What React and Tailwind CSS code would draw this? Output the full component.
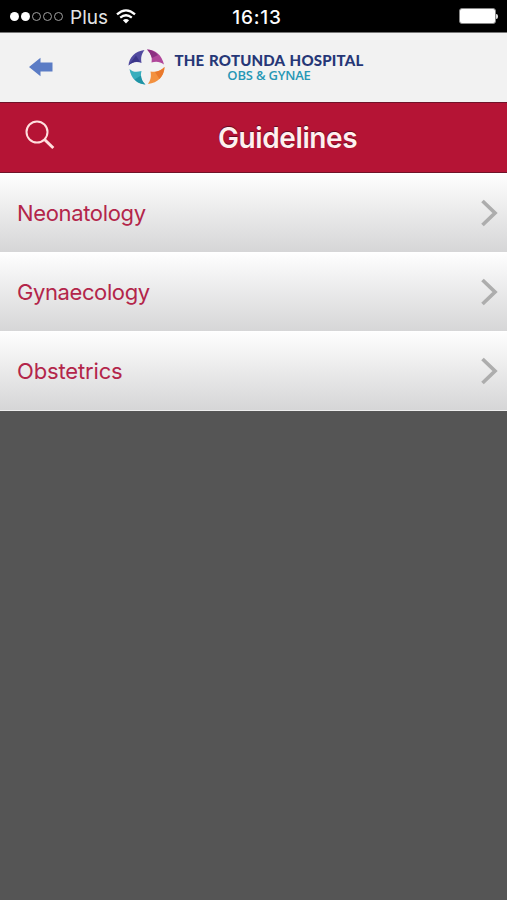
const rows = [
  { label: "Neonatology", tracking: "tracking-[-0.35px]" },
  { label: "Gynaecology", tracking: "tracking-[-0.4px]" },
  { label: "Obstetrics", tracking: "tracking-[-0.15px]" },
];

function StatusBar() {
  return (
    <div className="grid h-8 grid-cols-3 items-center bg-black pl-[10px] pr-[9px] text-white">
      <div className="flex items-center">
        <div className="flex gap-[2px]">
          <span className="size-[9px] rounded-full bg-white" />
          <span className="size-[9px] rounded-full bg-white" />
          <span className="size-[9px] rounded-full border border-[#a0a0a0]" />
          <span className="size-[9px] rounded-full border border-[#a0a0a0]" />
          <span className="size-[9px] rounded-full border border-[#a0a0a0]" />
        </div>
        <span className="ml-[7px] mt-[2px] text-[19px] leading-none text-[#e4e4e4]">Plus</span>
        <svg className="ml-[8px] h-[15px] w-[20px]" viewBox="0 0 20 15" fill="none" stroke="white">
          <path d="M1 5.4Q10-2.6 19 5.4" strokeWidth="2.3" />
          <path d="M4.2 8.7Q10 3.8 15.8 8.7" strokeWidth="2.2" />
          <path d="M10 14.5 6.9 11.3Q10 8.8 13.1 11.3Z" fill="white" stroke="none" />
        </svg>
      </div>
      <span className="mt-[2px] pl-[6px] text-center text-[19px] font-medium leading-none tracking-[0.8px]">16:13</span>
      <div className="flex items-center justify-end">
        <div className="h-[16px] w-[37px] rounded-[3px] border border-[#888] bg-white" />
        <span className="h-[5px] w-[2px] rounded-r bg-[#ddd]" />
      </div>
    </div>
  );
}

function Emblem() {
  return (
    <svg className="h-[36px] w-[37px]" viewBox="0 0 37 36">
      <path d="M.5 16.500C1 9 7 2 16.500 1C13.500 5 12.500 8.500 13.500 14C9 12 4 13 .5 16.500Z" fill="#514a9f" />
      <path d="M.5 16.500 8 6.500l4 6.500Q5 11.500 .5 16.500Z" fill="#3b3588" />
      <path d="M19 .5C27 .5 34 6 36 15.500C32 13 29 12 23.500 13.500C24.500 8 23 4 19 .5Z" fill="#b0479a" />
      <path d="M19 .5Q26 1 30 6L24 9Q22.500 4 19 .5Z" fill="#8b2f81" />
      <path d="M36.500 18C36.500 27 30 34 20 35C22.500 31 23.500 28 22.500 22.500C28 23.500 33 22 36.500 18Z" fill="#f3913f" />
      <path d="M36.500 18Q36 25 31.500 30L27 23Q33 22 36.500 18Z" fill="#e9792c" />
      <path d="M1.500 20C5 23 8 23.500 13.500 22C12 28 13.500 32 17.500 35.500C9.500 35 3 30 1.500 20Z" fill="#38aebd" />
      <path d="M17.500 35.500Q10.500 35 6.500 30.500L13 26.500Q13.500 32 17.500 35.500Z" fill="#1f93a5" />
    </svg>
  );
}

function BrandHeader() {
  return (
    <header className="flex h-[70px] items-center border-t border-[#777] bg-[#f2f2f2] pb-[2px]">
      <svg className="ml-[29px] h-[20px] w-[24px]" viewBox="0 0 24 20">
        <path d="M0 10 11.500.7V5.500H23.500v9H11.500V19.300Z" fill="#5b7cc5" />
      </svg>
      <div className="ml-[75px] flex items-center">
        <Emblem />
        <div className="ml-[9px] mt-[3px] flex w-[190px] flex-col items-center font-['Lato',sans-serif]">
          <span className="whitespace-nowrap text-[15px] font-black leading-[15px] tracking-[0.2px] text-[#263777] [word-spacing:1px]">THE ROTUNDA HOSPITAL</span>
          <span className="whitespace-nowrap font-['Open_Sans',sans-serif] text-[13px] font-semibold leading-[15px] tracking-[-0.2px] text-[#2797b5]">OBS &amp; GYNAE</span>
        </div>
      </div>
    </header>
  );
}

function TitleBar() {
  return (
    <div className="grid h-[71px] grid-cols-[68px_1fr] items-center border-y border-[#701329] bg-[#b51435]">
      <svg className="mb-[5px] ml-[25px] h-[30px] w-[30px]" viewBox="0 0 30 30" fill="none" stroke="#ffe0df">
        <circle cx="12" cy="12" r="10.500" strokeWidth="2" />
        <path d="m19.500 19.500 8.800 8.500" strokeWidth="3" />
      </svg>
      <h1 className="pl-[150px] text-[28px] font-semibold leading-none tracking-[-0.4px] text-[#fff0ef] [text-shadow:0_-1px_1px_#5d0b20]">Guidelines</h1>
    </div>
  );
}

function Row({ label, tracking }) {
  return (
    <li className="flex h-[79px] items-center justify-between border-t border-white bg-linear-to-b from-[#fefefe] to-[#d6d6d7] pl-[17px] pr-[9px]">
      <span className={`text-[22px] leading-none text-[#b3254a] ${tracking}`}>{label}</span>
      <svg className="h-[28px] w-[17px]" viewBox="0 0 17 28" fill="none" stroke="#adadad" strokeWidth="3.700">
        <path d="M1.500 2 14 14 1.500 26" />
      </svg>
    </li>
  );
}

export default function App() {
  return (
    <div className="flex h-[900px] w-[507px] flex-col overflow-hidden bg-[#555] font-['Inter',sans-serif]">
      <StatusBar />
      <BrandHeader />
      <TitleBar />
      <ul className="border-b border-[#eee]">
        {rows.map((row) => <Row key={row.label} {...row} />)}
      </ul>
    </div>
  );
}
